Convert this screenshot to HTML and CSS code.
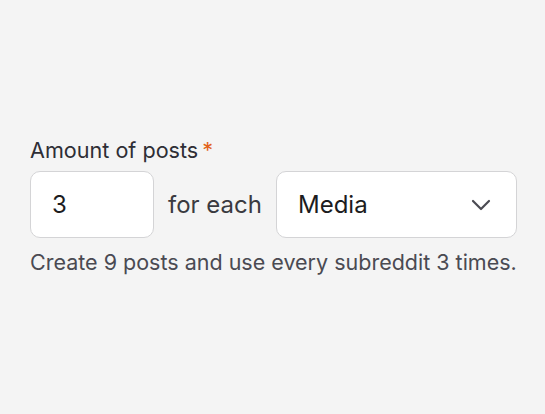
FILE: index.html
```html
<!DOCTYPE html>
<html>
<head>
<meta charset="utf-8">
<link rel="stylesheet" href="styles.css">
</head>
<body>
<div class="field">
  <div class="label">Amount of posts<span class="req">*</span></div>
  <div class="row">
    <div class="input">3</div>
    <div class="for">for each</div>
    <div class="select">
      <span>Media</span>
      <svg width="20" height="12" viewBox="0 0 20 12"><path d="M2 2 L10 10 L18 2" fill="none" stroke="#4b4b52" stroke-width="2.2" stroke-linecap="round" stroke-linejoin="round"/></svg>
    </div>
  </div>
  <div class="help">Create 9 posts and use every subreddit 3 times.</div>
</div>
</body>
</html>
```
FILE: styles.css
```css
html, body { margin: 0; padding: 0; }
body {
  background: #f4f4f4;
  width: 545px;
  height: 414px;
  font-family: Inter, "Noto Sans", sans-serif;
  color: #2a2a30;
}
.field {
  padding: 136px 0 0 30px;
}
.label {
  font-size: 21.6px;
  line-height: 28px;
  color: #2e2e35;
}
.req {
  color: #e2621b;
  margin-left: 4px;
}
.row {
  display: flex;
  align-items: center;
  margin-top: 7px;
}
.input {
  box-sizing: border-box;
  width: 124px;
  height: 67px;
  background: #fff;
  border: 1px solid #d4d4d6;
  border-radius: 10px;
  font-size: 24px;
  color: #1c1c20;
  display: flex;
  align-items: center;
  padding-left: 21px;
}
.for {
  font-size: 24px;
  color: #3a3a40;
  margin: 0 14px;
}
.select {
  box-sizing: border-box;
  width: 241px;
  height: 67px;
  background: #fff;
  border: 1px solid #d4d4d6;
  border-radius: 10px;
  display: flex;
  align-items: center;
  justify-content: space-between;
  padding: 0 25px 0 21px;
  font-size: 24px;
  color: #1c1c20;
}
.help {
  margin-top: 10px;
  font-size: 21.5px;
  line-height: 28px;
  color: #4a4a52;
}
```
